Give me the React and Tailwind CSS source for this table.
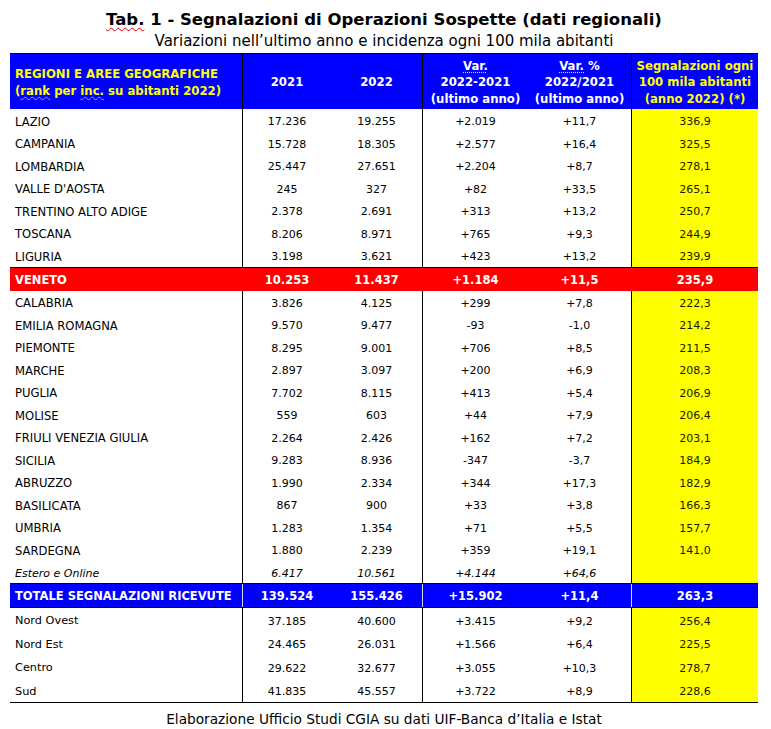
import React from "react";

const top = [
  ["LAZIO", "17.236", "19.255", "+2.019", "+11,7", "336,9"],
  ["CAMPANIA", "15.728", "18.305", "+2.577", "+16,4", "325,5"],
  ["LOMBARDIA", "25.447", "27.651", "+2.204", "+8,7", "278,1"],
  ["VALLE D'AOSTA", "245", "327", "+82", "+33,5", "265,1"],
  ["TRENTINO ALTO ADIGE", "2.378", "2.691", "+313", "+13,2", "250,7"],
  ["TOSCANA", "8.206", "8.971", "+765", "+9,3", "244,9"],
  ["LIGURIA", "3.198", "3.621", "+423", "+13,2", "239,9"],
];
const mid = [
  ["CALABRIA", "3.826", "4.125", "+299", "+7,8", "222,3"],
  ["EMILIA ROMAGNA", "9.570", "9.477", "-93", "-1,0", "214,2"],
  ["PIEMONTE", "8.295", "9.001", "+706", "+8,5", "211,5"],
  ["MARCHE", "2.897", "3.097", "+200", "+6,9", "208,3"],
  ["PUGLIA", "7.702", "8.115", "+413", "+5,4", "206,9"],
  ["MOLISE", "559", "603", "+44", "+7,9", "206,4"],
  ["FRIULI VENEZIA GIULIA", "2.264", "2.426", "+162", "+7,2", "203,1"],
  ["SICILIA", "9.283", "8.936", "-347", "-3,7", "184,9"],
  ["ABRUZZO", "1.990", "2.334", "+344", "+17,3", "182,9"],
  ["BASILICATA", "867", "900", "+33", "+3,8", "166,3"],
  ["UMBRIA", "1.283", "1.354", "+71", "+5,5", "157,7"],
  ["SARDEGNA", "1.880", "2.239", "+359", "+19,1", "141,0"],
];
const areas = [
  ["Nord Ovest", "37.185", "40.600", "+3.415", "+9,2", "256,4"],
  ["Nord Est", "24.465", "26.031", "+1.566", "+6,4", "225,5"],
  ["Centro", "29.622", "32.677", "+3.055", "+10,3", "278,7"],
  ["Sud", "41.835", "45.557", "+3.722", "+8,9", "228,6"],
];

const grid = "grid grid-cols-[233px_88px_92px_105px_104px_126px]";

function Row({ r, h = "h-[22.5px]", italic = false, nameSize = "text-[11.6px]" }) {
  const it = italic ? "italic" : "";
  return (
    <div className={`${grid} ${h} text-[11px] text-black`}>
      <div className={`flex items-center pl-[5px] pt-[4px] border-r border-black bg-white ${nameSize} ${it}`}>{r[0]}</div>
      <div className={`flex items-center justify-center pt-[4px] bg-white ${it}`}>{r[1]}</div>
      <div className={`flex items-center justify-center pt-[4px] border-r border-black bg-white ${it}`}>{r[2]}</div>
      <div className={`flex items-center justify-center pt-[4px] bg-white ${it}`}>{r[3]}</div>
      <div className={`flex items-center justify-center pt-[4px] border-r border-black bg-white ${it}`}>{r[4]}</div>
      <div className="flex items-center justify-center pt-[4px] bg-[#ffff00] text-[#1a1a00]">{r[5]}</div>
    </div>
  );
}

function HiRow({ r, bg, sep, cls }) {
  return (
    <div className={`${grid} ${bg} ${cls} text-white font-bold text-[11.5px]`}>
      <div className={`flex items-center pl-[5px] pt-[3px] border-r ${sep} whitespace-nowrap`}>{r[0]}</div>
      <div className="flex items-center justify-center pt-[3px]">{r[1]}</div>
      <div className={`flex items-center justify-center pt-[3px] border-r ${sep}`}>{r[2]}</div>
      <div className="flex items-center justify-center pt-[3px]">{r[3]}</div>
      <div className={`flex items-center justify-center pt-[3px] border-r ${sep}`}>{r[4]}</div>
      <div className="flex items-center justify-center pt-[3px]">{r[5]}</div>
    </div>
  );
}

export default function App() {
  return (
    <div className="w-[771px] h-[729px] bg-white pt-[8px] font-['DejaVu_Sans',sans-serif] text-black">
      <div className="ml-[10px] w-[748px]">
        <div className="text-center font-bold text-[16.5px] leading-[23px]">
          <span className="underline decoration-wavy decoration-red-600 decoration-1 underline-offset-2">Tab.</span> 1 - Segnalazioni di Operazioni Sospette (dati regionali)
        </div>
        <div className="text-center text-[15px] leading-[19px] mt-[1px]">
          Variazioni nell’ultimo anno e incidenza ogni 100 mila abitanti
        </div>

        <div className="mt-[2px] border-t border-black">
          <div className={`${grid} h-[55px] bg-[#0000ff] font-bold text-[11.7px] leading-[16.5px]`}>
            <div className="flex flex-col justify-center pl-[5px] pt-[2px] border-r border-black text-[#ffff00]">
              <div>REGIONI E AREE GEOGRAFICHE</div>
              <div>
                (<span className="underline decoration-wavy decoration-[#9aa0c8] decoration-1">rank</span> per{" "}
                <span className="underline decoration-wavy decoration-[#9aa0c8] decoration-1">inc.</span> su abitanti 2022)
              </div>
            </div>
            <div className="flex items-center justify-center pt-[2px] text-white">2021</div>
            <div className="flex items-center justify-center pt-[2px] border-r border-black text-white">2022</div>
            <div className="flex flex-col items-center justify-center pt-[2px] text-white text-center">
              <div><span className="underline decoration-dotted decoration-[#c8c8ff] underline-offset-2">Var.</span></div>
              <div>2022-2021</div>
              <div>(ultimo anno)</div>
            </div>
            <div className="flex flex-col items-center justify-center pt-[2px] border-r border-black text-white text-center">
              <div><span className="underline decoration-dotted decoration-[#c8c8ff] underline-offset-2">Var.</span> %</div>
              <div>2022/2021</div>
              <div>(ultimo anno)</div>
            </div>
            <div className="flex flex-col items-center justify-center pt-[2px] text-[#ffff00] text-center">
              <div>Segnalazioni ogni</div>
              <div>100 mila abitanti</div>
              <div>(anno 2022) (*)</div>
            </div>
          </div>

          {top.map((r) => (
            <Row key={r[0]} r={r} />
          ))}
          <HiRow
            r={["VENETO", "10.253", "11.437", "+1.184", "+11,5", "235,9"]}
            bg="bg-[#ff0000]"
            sep="border-[#ff0000]"
            cls="h-[24px] border-t border-black"
          />
          {mid.map((r) => (
            <Row key={r[0]} r={r} />
          ))}
          <Row r={["Estero e Online", "6.417", "10.561", "+4.144", "+64,6", ""]} italic nameSize="text-[11px]" />
          <HiRow
            r={["TOTALE SEGNALAZIONI RICEVUTE", "139.524", "155.426", "+15.902", "+11,4", "263,3"]}
            bg="bg-[#0000ff]"
            sep="border-[#d8d8ff]"
            cls="h-[25px] border-y border-black"
          />
          {areas.map((r) => (
            <Row key={r[0]} r={r} h="h-[23.5px]" nameSize="text-[11.3px]" />
          ))}
          <div className="border-t border-black" />
        </div>

        <div className="text-center text-[13.7px] leading-[18px] mt-[7px]">
          Elaborazione Ufficio Studi CGIA su dati UIF-Banca d’Italia e Istat
        </div>
      </div>
    </div>
  );
}
